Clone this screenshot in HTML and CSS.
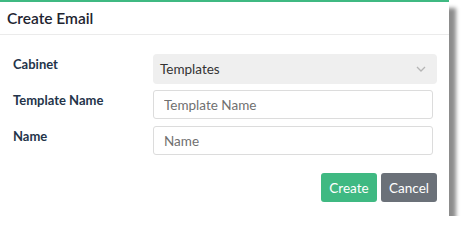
FILE: index.html
```html
<!DOCTYPE html>
<html lang="en">
<head>
  <meta charset="UTF-8">
  <title>Create Email</title>
  <link rel="stylesheet" href="styles.css">
</head>
<body>
<div class="dialog">
  <div class="dialog-header">Create Email</div>
  <div class="dialog-body">
    <div class="form-row">
      <label class="form-label">Cabinet</label>
      <div class="select-box">
        <span>Templates</span>
        <svg class="chevron" width="10" height="6" viewBox="0 0 10 6"><path d="M1 1 L5 5 L9 1" fill="none" stroke="#b5b5b5" stroke-width="1.3"/></svg>
      </div>
    </div>
    <div class="form-row">
      <label class="form-label">Template Name</label>
      <input class="text-input" type="text" placeholder="Template Name">
    </div>
    <div class="form-row">
      <label class="form-label">Name</label>
      <input class="text-input" type="text" placeholder="Name">
    </div>
  </div>
  <div class="dialog-footer">
    <button class="btn btn-create">Create</button>
    <button class="btn btn-cancel">Cancel</button>
  </div>
</div>
</body>
</html>
```

FILE: styles.css
```css
body {
  margin: 0;
  background: #fff;
  font-family: Lato, 'Noto Sans', sans-serif;
  color: #212529;
}
.dialog {
  width: 449px;
  height: 214px;
  background: #fff;
  border-top: 2px solid #3fb982;
  box-shadow: 7px 8px 4px rgba(0,0,0,0.45);
  display: flex;
  flex-direction: column;
}
.dialog-header {
  height: 32px;
  line-height: 33px;
  padding-left: 7px;
  font-size: 15.5px;
  font-weight: 600;
  border-bottom: 1px solid #ebebeb;
  color: #1e2430;
}
.dialog-body {
  padding: 19px 12px 0 13px;
  display: flex;
  flex-direction: column;
  gap: 6px;
}
.form-row {
  display: grid;
  grid-template-columns: 140px 1fr;
  align-items: start;
}
.form-label {
  font-size: 13px;
  font-weight: 700;
  color: #24344a;
  padding-top: 2px;
}
.select-box {
  height: 30px;
  background: #efefef;
  border-radius: 4px;
  display: flex;
  align-items: center;
  justify-content: space-between;
  padding: 0 11px 0 7px;
  font-size: 13.5px;
  color: #333;
}
.text-input {
  height: 29px;
  box-sizing: border-box;
  margin-right: 4px;
  border: 1px solid #dcdcdc;
  border-radius: 3px;
  padding: 0 10px;
  font-family: inherit;
  font-size: 13.5px;
  outline: none;
}
.form-row + .form-row + .form-row {
  margin-top: 1px;
}
.text-input::placeholder {
  color: #707070;
}
.dialog-footer {
  display: flex;
  justify-content: flex-end;
  gap: 4px;
  padding: 18px 12px 0 0;
}
.btn {
  height: 29px;
  border: none;
  border-radius: 3px;
  color: #fff;
  font-family: inherit;
  font-size: 13.5px;
  padding: 0;
}
.btn-create {
  background: #3fb982;
  width: 56px;
}
.btn-cancel {
  background: #6b7179;
  width: 56px;
}
```
